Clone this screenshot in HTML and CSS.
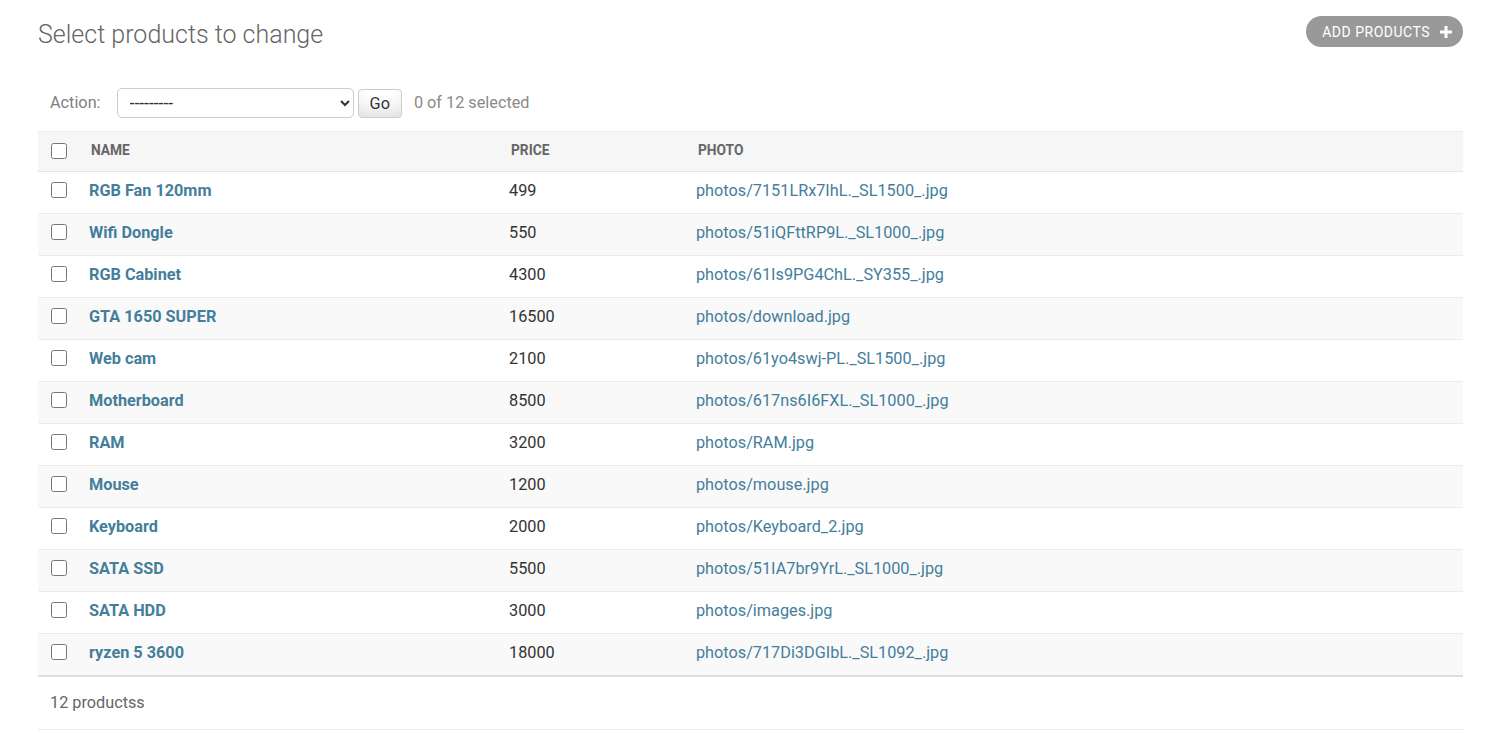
FILE: index.html
```html
<!DOCTYPE html>
<html lang="en">
<head>
<meta charset="utf-8">
<title>Select products to change</title>
<link rel="stylesheet" href="styles.css">
</head>
<body>
<div class="content">
  <div class="header">
    <h1 class="title">Select products to change</h1>
    <a class="addlink" href="#">ADD PRODUCTS
      <svg class="plus" width="12" height="12" viewBox="0 0 12 12"><path d="M4.5 0h3v4.5H12v3H7.5V12h-3V7.5H0v-3h4.5z" fill="#fff"/></svg>
    </a>
  </div>
  <div class="actions">
    <label class="action-label">Action:</label>
    <select class="action-select"><option>---------</option><option>Delete selected productss</option></select>
    <button class="go" type="button">Go</button>
    <span class="counter">0 of 12 selected</span>
  </div>
  <table class="results">
    <colgroup><col class="c-check"><col class="c-name"><col class="c-price"><col></colgroup>
    <thead>
      <tr><th class="check"><input type="checkbox"></th><th>NAME</th><th>PRICE</th><th>PHOTO</th></tr>
    </thead>
    <tbody>
      <tr><td class="check"><input type="checkbox"></td><td><a class="name" href="#">RGB Fan 120mm</a></td><td>499</td><td><a class="file" href="#">photos/7151LRx7IhL._SL1500_.jpg</a></td></tr>
      <tr><td class="check"><input type="checkbox"></td><td><a class="name" href="#">Wifi Dongle</a></td><td>550</td><td><a class="file" href="#">photos/51iQFttRP9L._SL1000_.jpg</a></td></tr>
      <tr><td class="check"><input type="checkbox"></td><td><a class="name" href="#">RGB Cabinet</a></td><td>4300</td><td><a class="file" href="#">photos/61Is9PG4ChL._SY355_.jpg</a></td></tr>
      <tr><td class="check"><input type="checkbox"></td><td><a class="name" href="#">GTA 1650 SUPER</a></td><td>16500</td><td><a class="file" href="#">photos/download.jpg</a></td></tr>
      <tr><td class="check"><input type="checkbox"></td><td><a class="name" href="#">Web cam</a></td><td>2100</td><td><a class="file" href="#">photos/61yo4swj-PL._SL1500_.jpg</a></td></tr>
      <tr><td class="check"><input type="checkbox"></td><td><a class="name" href="#">Motherboard</a></td><td>8500</td><td><a class="file" href="#">photos/617ns6I6FXL._SL1000_.jpg</a></td></tr>
      <tr><td class="check"><input type="checkbox"></td><td><a class="name" href="#">RAM</a></td><td>3200</td><td><a class="file" href="#">photos/RAM.jpg</a></td></tr>
      <tr><td class="check"><input type="checkbox"></td><td><a class="name" href="#">Mouse</a></td><td>1200</td><td><a class="file" href="#">photos/mouse.jpg</a></td></tr>
      <tr><td class="check"><input type="checkbox"></td><td><a class="name" href="#">Keyboard</a></td><td>2000</td><td><a class="file" href="#">photos/Keyboard_2.jpg</a></td></tr>
      <tr><td class="check"><input type="checkbox"></td><td><a class="name" href="#">SATA SSD</a></td><td>5500</td><td><a class="file" href="#">photos/51IA7br9YrL._SL1000_.jpg</a></td></tr>
      <tr><td class="check"><input type="checkbox"></td><td><a class="name" href="#">SATA HDD</a></td><td>3000</td><td><a class="file" href="#">photos/images.jpg</a></td></tr>
      <tr><td class="check"><input type="checkbox"></td><td><a class="name" href="#">ryzen 5 3600</a></td><td>18000</td><td><a class="file" href="#">photos/717Di3DGIbL._SL1092_.jpg</a></td></tr>
    </tbody>
  </table>
  <p class="paginator">12 productss</p>
</div>
</body>
</html>
```
FILE: styles.css
```css
html, body {
  margin: 0;
  padding: 0;
  background: #fff;
}
body {
  font-family: Roboto, "Liberation Sans", Arial, sans-serif;
  color: #333;
  font-size: 16px;
}
.content {
  padding: 16px 45px 0 38px;
}
.header {
  display: flex;
  justify-content: space-between;
  align-items: flex-start;
}
.title {
  margin: 5px 0 0 0;
  font-size: 25px;
  font-weight: 300;
  line-height: 28px;
  color: #666;
}
.addlink {
  display: flex;
  align-items: center;
  gap: 10px;
  height: 31px;
  box-sizing: border-box;
  padding: 0 11px 0 16px;
  border-radius: 16px;
  background: #999;
  color: #fff;
  text-decoration: none;
  font-size: 14px;
  letter-spacing: 0.5px;
  font-weight: 400;
}
.plus { display: block; }
.actions {
  display: flex;
  align-items: center;
  height: 30px;
  margin: 39px 0 13px 0;
  padding: 0 12px;
  color: #808080;
}
.action-label {
  font-size: 16.25px;
  margin-right: 16px;
  margin-bottom: 2px;
}
.action-select {
  width: 237px;
  height: 30px;
  border: 1px solid #ccc;
  border-radius: 5px;
  background: #fff;
  color: #333;
  font-family: Roboto, "Liberation Sans", Arial, sans-serif;
  font-size: 17.5px;
  padding: 0 0 0 8px;
  margin: 0;
}
.go {
  height: 29px;
  margin-left: 4px;
  padding: 0 11px;
  border: 1px solid #ccc;
  border-radius: 4px;
  background: #fff;
  box-shadow: 0 -15px 20px -10px rgba(0,0,0,0.15) inset;
  font-family: Roboto, "Liberation Sans", Arial, sans-serif;
  font-size: 16.25px;
  color: #333;
}
.counter {
  margin-left: 12px;
  margin-bottom: 2px;
  font-size: 16.25px;
  color: #8a8a8a;
}
.results {
  width: 100%;
  border-collapse: collapse;
  table-layout: fixed;
}
.c-check { width: 41px; }
.c-name { width: 420px; }
.c-price { width: 187px; }
.results th {
  background: #f6f6f6;
  border-top: 1px solid #ebebeb;
  border-bottom: 1px solid #e4e4e4;
  text-align: left;
  font-size: 13.75px;
  font-weight: 700;
  color: #666;
  line-height: 17px;
  padding: 10px 10px 12px 12px;
}
.results td {
  padding: 8px 10px 12px 10px;
  line-height: 21px;
  border-bottom: 1px solid #ececec;
  font-size: 16.25px;
  color: #333;
  white-space: nowrap;
}
.results tbody tr:nth-child(even) td { background: #f9f9f9; }
.results tbody tr:last-child td { border-bottom: 1px solid #dcdcdc; }
.results th.check {
  padding: 11px 0 0 13px;
  vertical-align: top;
}
.results td.check {
  padding: 10px 0 0 13px;
  vertical-align: top;
}
.results input[type=checkbox] {
  width: 16px;
  height: 16px;
  margin: 0;
  display: block;
}
.name {
  color: #447e9b;
  font-weight: 700;
  text-decoration: none;
}
.file {
  color: #447e9b;
  text-decoration: none;
}
.paginator {
  margin: 0;
  padding: 15px 12px 16px 12px;
  line-height: 21px;
  border-top: 1px solid #e0e0e0;
  border-bottom: 1px solid #eaeaea;
  color: #666;
  font-size: 16.25px;
}
```
